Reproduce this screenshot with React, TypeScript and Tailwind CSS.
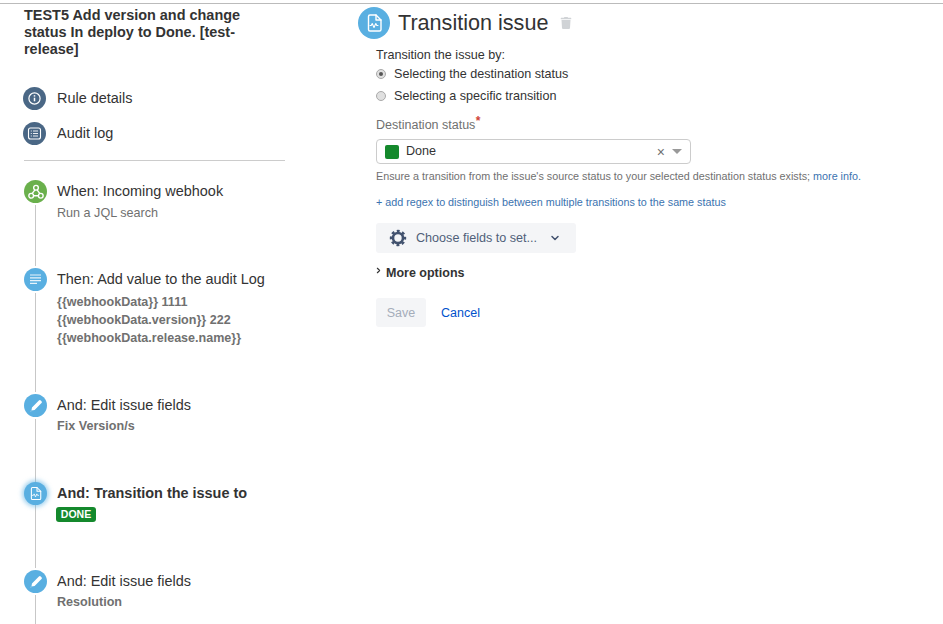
import type { ReactNode } from "react";
import { ChevronDown, ChevronRight } from "lucide-react";
import { FaTrash } from "react-icons/fa";

function FileWave({ size }: { size: number }) {
  return (
    <svg width={size} height={size} viewBox="0 0 20 20" fill="none" stroke="white" strokeWidth="1.4" strokeLinejoin="round" strokeLinecap="round">
      <path d="M6 2h6l5 5v9.5a1.5 1.5 0 0 1-1.5 1.5h-9.5a1.5 1.5 0 0 1-1.5-1.5v-13a1.5 1.5 0 0 1 1.5-1.5z" />
      <path d="M12 2v5h5" />
      <path d="M6 12.5h1.2l1-2 1.8 4 1.8-4 1 2h1.2" strokeWidth="1.1" />
    </svg>
  );
}

function InfoIcon() {
  return (
    <svg width="15" height="15" viewBox="0 0 15 15" fill="none" stroke="white">
      <circle cx="7.5" cy="7.5" r="5.6" strokeWidth="1.2" />
      <path d="M7.5 6.7v3.6" strokeWidth="1.5" />
      <path d="M7.5 4.2v1.4" strokeWidth="1.5" />
    </svg>
  );
}

function LogIcon() {
  return (
    <svg width="15" height="15" viewBox="0 0 15 15" fill="none" stroke="white">
      <rect x="1.5" y="2" width="12" height="11" rx="2" strokeWidth="1.1" />
      <path d="M3.8 5h1M6 5h5M3.8 7.5h1M6 7.5h5M3.8 10h1M6 10h5" strokeWidth="0.9" />
    </svg>
  );
}

function WebhookIcon() {
  return (
    <svg width="16" height="16" viewBox="0 0 15 15" fill="none" stroke="white" strokeWidth="1.3">
      <circle cx="7.5" cy="3.5" r="2.2" />
      <circle cx="3" cy="11" r="2.2" />
      <circle cx="12" cy="11" r="2.2" />
      <path d="M6.5 5.5L3.8 9M8.5 5.5l2.7 3.5M5.2 11h4.6" />
    </svg>
  );
}

function LinesIcon() {
  return (
    <svg width="13" height="13" viewBox="0 0 13 13" fill="none" stroke="white" strokeWidth="1.2" strokeOpacity="0.85">
      <path d="M1 2h11M1 4.8h11M1 7.6h11M1 10.4h7" />
    </svg>
  );
}

function PencilIcon() {
  return (
    <svg width="14" height="14" viewBox="0 0 15 15" fill="white">
      <path d="M10.6 1.6a1.4 1.4 0 0 1 2 0l.8.8a1.4 1.4 0 0 1 0 2L6 11.8 2.6 12.4l.6-3.4z" />
      <path d="M1.5 13.6l1.2-.5-.7-.7z" opacity="0.6" />
    </svg>
  );
}

function GearIcon() {
  return (
    <svg width="18" height="18" viewBox="0 0 18 18" fill="none" stroke="#42526e">
      <circle cx="9" cy="9" r="5" strokeWidth="2.6" />
      <circle cx="9" cy="9" r="7" strokeWidth="2.4" strokeDasharray="2.9 2.6" strokeDashoffset="1.45" />
    </svg>
  );
}

function Circle({ className, children }: { className: string; children: ReactNode }) {
  return (
    <span className={`flex items-center justify-center rounded-full shrink-0 ${className}`}>
      {children}
    </span>
  );
}

function Step({
  icon,
  title,
  bold,
  color = "bg-[#59afe1]",
  height,
  children,
}: {
  icon: ReactNode;
  title: string;
  bold?: boolean;
  color?: string;
  height: string;
  children?: ReactNode;
}) {
  return (
    <div className={`relative flex gap-[10px] ${height}`}>
      <Circle
        className={`w-[23px] h-[23px] ${color} ${
          bold ? "shadow-[0_0_4px_2px_rgba(89,175,225,0.55)]" : "ring-[2px] ring-white"
        }`}
      >
        {icon}
      </Circle>
      <div>
        <div className={`text-[14.45px] leading-[22px] text-[#333] ${bold ? "font-bold" : ""}`}>{title}</div>
        {children}
      </div>
    </div>
  );
}

export default function App() {
  return (
    <div className="w-[943px] h-[624px] overflow-hidden bg-white pt-[3px] font-['Liberation_Sans',sans-serif] text-[#333]">
      <div className="flex h-full border-t border-[#bbbbbb]">
        <aside className="w-[285px] shrink-0 ml-[24px] pt-[3px]">
          <h1 className="w-[225px] text-[14.45px] leading-[17px] font-bold text-[#333]">
            TEST5 Add version and change status In deploy to Done. [test-release]
          </h1>
          <div className="mt-[29px] flex flex-col gap-[12px] -ml-[1px]">
            <div className="flex items-center gap-[11px] h-[23px]">
              <Circle className="w-[23px] h-[23px] bg-[#4a6785]"><InfoIcon /></Circle>
              <span className="text-[14.45px]">Rule details</span>
            </div>
            <div className="flex items-center gap-[11px] h-[23px]">
              <Circle className="w-[23px] h-[23px] bg-[#4a6785]"><LogIcon /></Circle>
              <span className="text-[14.45px]">Audit log</span>
            </div>
          </div>
          <div className="mt-[15px] w-[261px] border-t border-[#cccccc]" />
          <div className="relative mt-[19px]">
            <div className="absolute left-[11px] top-0 bottom-0 w-[1px] bg-[#c7c7c7]" />
            <Step height="h-[88px]" color="bg-[#6ab04c]" title="When: Incoming webhook" icon={<WebhookIcon />}>
              <div className="mt-[1px] text-[12.6px] leading-[20px] text-[#707070]">Run a JQL search</div>
            </Step>
            <Step height="h-[126px]" title="Then: Add value to the audit Log" icon={<LinesIcon />}>
              <div className="mt-[3px] text-[12.55px] leading-[18px] font-bold text-[#707070]">
                <div>{"{{webhookData}} 1111"}</div>
                <div>{"{{webhookData.version}} 222"}</div>
                <div>{"{{webhookData.release.name}}"}</div>
              </div>
            </Step>
            <Step height="h-[88px]" title="And: Edit issue fields" icon={<PencilIcon />}>
              <div className="text-[12.6px] leading-[20px] font-bold text-[#707070]">Fix Version/s</div>
            </Step>
            <Step height="h-[88px]" bold title="And: Transition the issue to" icon={<FileWave size={15} />}>
              <span className="-ml-[1px] mt-[3px] flex w-[40px] h-[15px] items-center justify-center rounded-[3px] bg-[#14892c] text-[10.5px] font-bold text-white">
                DONE
              </span>
            </Step>
            <Step height="h-[60px]" title="And: Edit issue fields" icon={<PencilIcon />}>
              <div className="text-[12.6px] leading-[20px] font-bold text-[#707070]">Resolution</div>
            </Step>
          </div>
        </aside>

        <main className="pl-[67px] flex-1">
          <div className="-ml-[18px] mt-[3px] flex items-center h-[32px]">
            <Circle className="w-[32px] h-[32px] bg-[#59afe1]"><FileWave size={20} /></Circle>
            <h2 className="ml-[8px] text-[21.6px] leading-[32px] text-[#333]">Transition issue</h2>
            <FaTrash className="ml-[12px] text-[#d0d3d6]" size={12} />
          </div>
          <div className="mt-[8px] text-[12.6px] leading-[17px]">Transition the issue by:</div>
          <label className="-mt-[1px] flex items-center gap-[8px] h-[22px] text-[12.6px]">
            <span className="flex items-center justify-center w-[10px] h-[10px] rounded-full bg-[#e0e0e0] border border-[#aaa]">
              <span className="w-[4px] h-[4px] rounded-full bg-[#555]" />
            </span>
            Selecting the destination status
          </label>
          <label className="flex items-center gap-[8px] h-[22px] text-[12.6px]">
            <span className="w-[10px] h-[10px] rounded-full bg-[#e0e0e0] border border-[#aaa]" />
            Selecting a specific transition
          </label>
          <div className="relative mt-[10px] text-[12.5px] leading-[17px] text-[#707070]">
            Destination status
            <span className="absolute top-[-3px] ml-[0.5px] text-[12px] leading-[14px] font-bold text-[#d04437]">*</span>
          </div>
          <div className="mt-[5px] flex items-center w-[315px] h-[25px] rounded-[4px] border border-[#ccc] pl-[8px] pr-[8px]">
            <span className="w-[14px] h-[14px] rounded-[2px] bg-[#14892c]" />
            <span className="ml-[7px] text-[12.6px] flex-1">Done</span>
            <span className="text-[14px] leading-none text-[#707070]">×</span>
            <span className="ml-[7px] w-0 h-0 border-x-[5px] border-x-transparent border-t-[5px] border-t-[#999]" />
          </div>
          <p className="mt-[5px] text-[10.78px] leading-[14px] text-[#707070]">
            Ensure a transition from the issue's source status to your selected destination status exists;{" "}
            <span className="text-[#3b73af]">more info.</span>
          </p>
          <p className="mt-[12px] text-[10.78px] leading-[14px] text-[#3b73af]">
            + add regex to distinguish between multiple transitions to the same status
          </p>
          <button className="mt-[14px] flex items-center w-[200px] h-[30px] rounded-[3px] bg-[#f4f5f7] pl-[13px] text-[12.6px] text-[#505f79]">
            <GearIcon />
            <span className="ml-[9px]">Choose fields to set...</span>
            <ChevronDown size={12} strokeWidth={3} className="ml-[12px] text-[#42526e]" />
          </button>
          <div className="relative mt-[12px] pl-[10px] text-[12.5px] leading-[17px] font-bold">
            <ChevronRight size={9} strokeWidth={3} className="absolute left-[-2px] top-[1px] text-[#333]" />
            More options
          </div>
          <div className="mt-[16px] flex items-center">
            <button className="w-[50px] h-[29px] pt-[1px] rounded-[3px] bg-[#f4f5f7] text-[12.5px] text-[#a5adba]">Save</button>
            <span className="ml-[15px] pt-[1px] text-[12.5px] text-[#0052cc]">Cancel</span>
          </div>
        </main>
      </div>
    </div>
  );
}
